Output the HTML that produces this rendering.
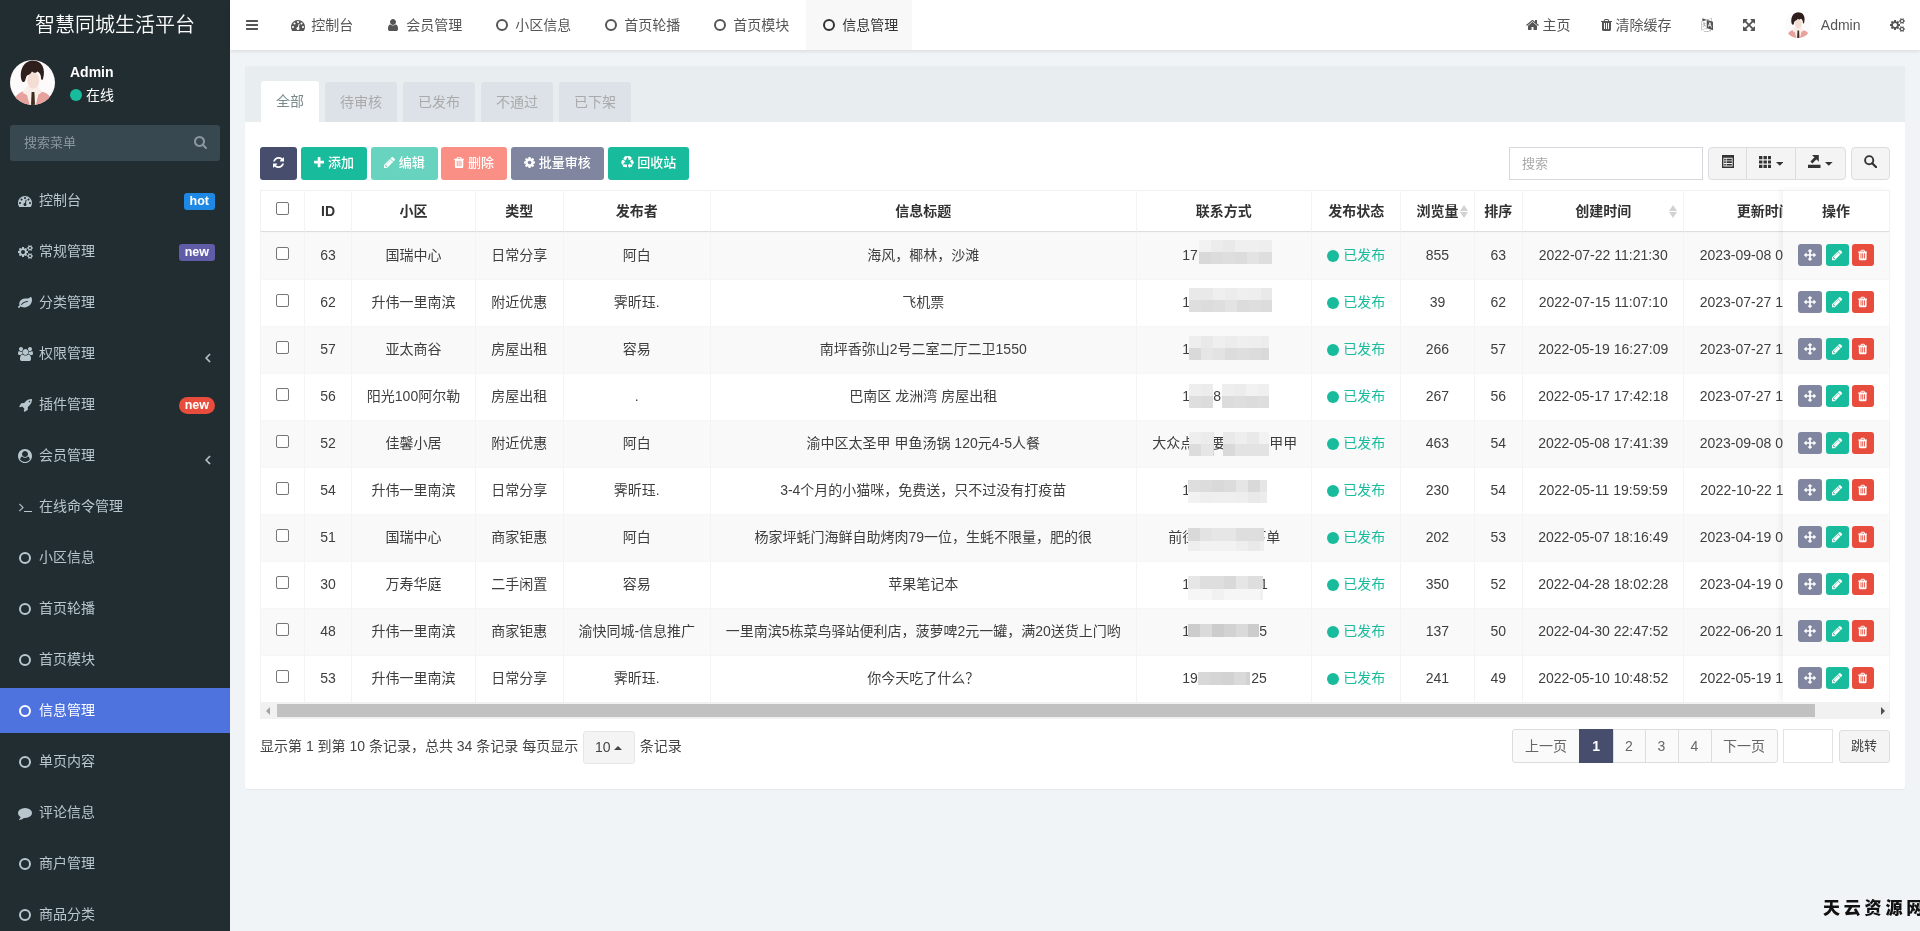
<!DOCTYPE html><html lang="zh-CN"><head><meta charset="utf-8"><title>智慧同城生活平台</title><style>
*{box-sizing:border-box}
html,body{margin:0;padding:0}
body{will-change:transform;width:1920px;height:931px;overflow:hidden;background:#f1f4f6;font-family:"Liberation Sans","Noto Sans CJK SC",sans-serif;font-size:14px;color:#444;position:relative;line-height:1.42857}
svg.fa{display:inline-block;vertical-align:-2px}
#side{position:absolute;left:0;top:0;width:230px;height:931px;background:#222d32;overflow:hidden}
#logo{height:50px;line-height:51px;text-align:center;color:#fff;font-size:20px;font-weight:350;letter-spacing:0}
#user{position:absolute;left:10px;top:60px;height:45px}
#user .nm{position:absolute;left:60px;top:3px;color:#fff;font-weight:bold;font-size:14px;white-space:nowrap}
#user .st{position:absolute;left:60px;top:26px;color:#fff;font-size:14px;white-space:nowrap}
#user .dot{display:inline-block;width:12px;height:12px;border-radius:50%;background:#18bc9c;margin-right:4px;vertical-align:-.5px}
#sform{position:absolute;left:10px;top:125px;width:210px;height:36px;background:#374850;border-radius:3px;color:#8b979e;font-size:13px;line-height:36px;padding-left:14px}
#sform svg{position:absolute;right:13px;top:10px}
ul.menu{position:absolute;left:0;top:174.5px;margin:0;padding:0;list-style:none;width:230px}
ul.menu li{height:45px;margin:3px 0 6px 0;line-height:45px;color:#b8c7ce;font-size:14px;position:relative;padding-left:39px;white-space:nowrap}
ul.menu li .ic{position:absolute;left:16px;top:1px;width:18px;text-align:center}
ul.menu li.act{background:#4e73df;color:#fff}
.co{display:inline-block;width:12px;height:12px;border:2px solid currentColor;border-radius:50%;vertical-align:-1px}
.lab{position:absolute;right:15px;top:15.5px;height:17px;line-height:16px;font-size:12.5px;font-weight:bold;color:#fff;padding:0 6px;border-radius:3px}
.ang{position:absolute;right:19.5px;top:5px}
#top{position:absolute;left:230px;top:0;width:1690px;height:50px;background:#fff;box-shadow:0 1px 4px rgba(0,21,41,.12)}
#top .t{position:absolute;top:0;height:50px;line-height:50px;color:#555;font-size:14px;white-space:nowrap}
#top .fw{display:inline-block;width:18px;text-align:center}
#top .t.act{background:#f8f8f8;color:#333}
#panel{position:absolute;left:245px;top:65px;width:1660px;height:724px}
#pbg{position:absolute;left:0;top:1px;width:1660px;height:723px;background:#fff;border-radius:0 0 3px 3px;box-shadow:0 1px 1px rgba(0,0,0,.05)}
#phead{position:absolute;left:0;top:1px;width:1660px;height:55.5px;background:#e8edf0}
.tab{position:absolute;top:15.5px;height:40px;line-height:40px;text-align:center;font-size:14px;color:#aaa;background:#dce2e8;border-radius:3px 3px 0 0}
.tab.act{background:#fff;color:#7b8a8b;top:15px;height:40.5px}
.btn{position:absolute;top:82px;height:33px;line-height:32px;font-weight:500;color:#fff;font-size:13px;border-radius:3px;text-align:center;white-space:nowrap}

#tw{position:absolute;left:15px;top:125px;width:1630px;height:512px;overflow:hidden}
#tw table{border-collapse:separate;border-spacing:0;table-layout:fixed;width:1695px;border:0}
#tw th{height:42px;padding:1px 0 0 0;box-sizing:border-box;text-align:center;font-weight:bold;color:#333;border-left:1px solid #f4f4f4;border-bottom:1px solid #ddd;border-top:1px solid #f1f1f1;white-space:nowrap;overflow:hidden;position:relative;vertical-align:middle;font-size:14px}
#tw td{height:47px;box-sizing:border-box;padding:0;text-align:center;border-left:1px solid #f4f4f4;border-top:1px solid #f6f6f6;white-space:nowrap;overflow:hidden;position:relative;vertical-align:middle;color:#3e3e3e}
#tw tr.o td{background:#f9f9f9}
#tw td.c{text-align:left}
#tw td.c b{font-weight:normal;position:absolute;top:13px}
.mz{position:absolute;height:12px;display:block}
.ck{display:inline-block;width:13px;height:13px;border:1px solid #767676;border-radius:2px;background:#fff;vertical-align:middle;position:relative;top:-3px}
.pub{color:#18bc9c}
.pub i{display:inline-block;width:12px;height:12px;border-radius:50%;background:#18bc9c;margin-right:4px;vertical-align:-1.5px}
.srt{position:absolute;right:6px;top:14px;width:8px;height:14px}
.srt:before,.srt:after{content:"";position:absolute;left:0;border-left:4px solid transparent;border-right:4px solid transparent}
.srt:before{top:0;border-bottom:6.5px solid #d2d2d2}
.srt:after{top:7px;border-top:6.5px solid #d2d2d2}
#fx{position:absolute;left:1538px;top:125px;width:107px;height:512px;background:#fff;box-shadow:-3px 0 6px rgba(0,0,0,.05);overflow:hidden}
#fx .fh{height:42px;line-height:40.5px;text-align:center;font-weight:bold;color:#333;border-bottom:1px solid #ddd;border-top:1px solid #f1f1f1;border-right:1px solid #f1f1f1}
#fx .fr{height:47px;position:relative;border-right:1px solid #f4f4f4;border-top:1px solid #f6f6f6}
#fx .fr.o{background:#f9f9f9}
.ab{position:absolute;top:11px;height:22px;border-radius:3px;text-align:center;line-height:20px;color:#fff}
.ab svg{vertical-align:-2px}
#sb{position:absolute;left:15px;top:637px;width:1630px;height:17px;background:#f1f1f1}
#sb .th{position:absolute;left:17px;top:2px;width:1538px;height:13px;background:#c1c1c1}
#sb .al,#sb .ar{position:absolute;top:4.5px;border-top:4px solid transparent;border-bottom:4px solid transparent}
#sb .al{left:6px;border-right:4.5px solid #a3a3a3}
#sb .ar{right:5px;border-left:4.5px solid #505050}
#pinfo{position:absolute;left:15px;top:665px;height:33px;line-height:33px;color:#444;white-space:nowrap}
#pinfo .dd{display:inline-block;width:52px;position:relative;left:.5px;top:1px;height:33px;line-height:31px;border:1px solid #e6e6e6;background:#f4f4f4;border-radius:3px;text-align:center;margin:0 5.5px 0 4px;vertical-align:top;color:#444}
.pg{position:absolute;top:664px;height:34px;line-height:32px;text-align:center;border:1px solid #ddd;background:#fafafa;color:#666;white-space:nowrap}
#pinfo .cu{display:inline-block;border-left:4px solid transparent;border-right:4px solid transparent;border-bottom:4.5px solid #444;vertical-align:2px}
#srch{position:absolute;left:1264px;top:82px;width:194px;height:33px;border:1px solid #d4d7dc;background:#fff;color:#aaa;line-height:31px;padding-left:12px;font-size:13px}
.tb{position:absolute;top:82px;height:32.5px;border:1px solid #ddd;background:#f4f4f4;color:#444;text-align:center;line-height:31px;white-space:nowrap}
#wm{position:absolute;left:1823px;top:894.5px;font-size:17px;font-weight:900;color:#111;letter-spacing:3.8px;white-space:nowrap;font-family:"Noto Sans CJK SC","Liberation Sans",sans-serif}
</style></head><body>
<div id="side"><div id="logo">智慧同城生活平台</div>
<div id="user"><svg width="45" height="45" viewBox="0 0 45 45" style="display:block"><defs><clipPath id="c45"><circle cx="22.5" cy="22.5" r="22.5"/></clipPath></defs><g clip-path="url(#c45)"><rect width="45" height="45" fill="#fcfafa"/><path d="M3 46C3 37 9 31 18 30.5L21.5 46zM43 46C43 38 38 31.5 29 31.5L25.5 46z" fill="#e8a29e"/><path d="M13 33c1-5 5-8 9.500-8s8 3 9.500 7l-4 3-3 11h-5l-3-11z" fill="#f8efeb"/><ellipse cx="23.300" cy="20.500" rx="6" ry="8" fill="#f4ddd2"/><path d="M11.5 20C9 10 14 .5 23 .5c9 0 13 8.500 10 18.500-.5 1.500-2 1-2-1 0-3-1.500-5.500-3.500-6.500-1.500 2-4 1.500-5.500 0-1 2.500-3.500 3.500-5 4-1 1.500-1.500 4-2 5.500-1 2-3 1-3.500-1z" fill="#2f1f1c"/><path d="M21.600 32h2.800l.6 13h-4z" fill="#3d2c22"/></g></svg><div class="nm">Admin</div><div class="st"><span class="dot"></span>在线</div></div>
<div id="sform">搜索菜单<svg class="fa" width="13.00" height="14" viewBox="0 -1536 1664 1792" style=""><path fill="#8b979e" transform="scale(1,-1)" d="M1152 704q0 185 -131.5 316.5t-316.5 131.5t-316.5 -131.5t-131.5 -316.5t131.5 -316.5t316.5 -131.5t316.5 131.5t131.5 316.5zM1664 -128q0 -52 -38 -90t-90 -38q-54 0 -90 38l-343 342q-179 -124 -399 -124q-143 0 -273.5 55.5t-225 150t-150 225t-55.5 273.5 t55.5 273.5t150 225t225 150t273.5 55.5t273.5 -55.5t225 -150t150 -225t55.5 -273.5q0 -220 -124 -399l343 -343q37 -37 37 -90z"/></svg></div>
<ul class="menu">
<li><span class="ic"><svg class="fa" width="14.00" height="14" viewBox="0 -1536 1792 1792" style=""><path fill="currentColor" transform="scale(1,-1)" d="M384 384q0 53 -37.5 90.5t-90.5 37.5t-90.5 -37.5t-37.5 -90.5t37.5 -90.5t90.5 -37.5t90.5 37.5t37.5 90.5zM576 832q0 53 -37.5 90.5t-90.5 37.5t-90.5 -37.5t-37.5 -90.5t37.5 -90.5t90.5 -37.5t90.5 37.5t37.5 90.5zM1004 351l101 382q6 26 -7.5 48.5t-38.5 29.5 t-48 -6.5t-30 -39.5l-101 -382q-60 -5 -107 -43.5t-63 -98.5q-20 -77 20 -146t117 -89t146 20t89 117q16 60 -6 117t-72 91zM1664 384q0 53 -37.5 90.5t-90.5 37.5t-90.5 -37.5t-37.5 -90.5t37.5 -90.5t90.5 -37.5t90.5 37.5t37.5 90.5zM1024 1024q0 53 -37.5 90.5 t-90.5 37.5t-90.5 -37.5t-37.5 -90.5t37.5 -90.5t90.5 -37.5t90.5 37.5t37.5 90.5zM1472 832q0 53 -37.5 90.5t-90.5 37.5t-90.5 -37.5t-37.5 -90.5t37.5 -90.5t90.5 -37.5t90.5 37.5t37.5 90.5zM1792 384q0 -261 -141 -483q-19 -29 -54 -29h-1402q-35 0 -54 29 q-141 221 -141 483q0 182 71 348t191 286t286 191t348 71t348 -71t286 -191t191 -286t71 -348z"/></svg></span>控制台<span class="lab" style="background:#1e88e5;border-radius:3px">hot</span></li>
<li><span class="ic"><svg class="fa" width="15.00" height="14" viewBox="0 -1536 1920 1792" style=""><path fill="currentColor" transform="scale(1,-1)" d="M896 640q0 106 -75 181t-181 75t-181 -75t-75 -181t75 -181t181 -75t181 75t75 181zM1664 128q0 52 -38 90t-90 38t-90 -38t-38 -90q0 -53 37.5 -90.5t90.5 -37.5t90.5 37.5t37.5 90.5zM1664 1152q0 52 -38 90t-90 38t-90 -38t-38 -90q0 -53 37.5 -90.5t90.5 -37.5 t90.5 37.5t37.5 90.5zM1280 731v-185q0 -10 -7 -19.5t-16 -10.5l-155 -24q-11 -35 -32 -76q34 -48 90 -115q7 -11 7 -20q0 -12 -7 -19q-23 -30 -82.5 -89.5t-78.5 -59.5q-11 0 -21 7l-115 90q-37 -19 -77 -31q-11 -108 -23 -155q-7 -24 -30 -24h-186q-11 0 -20 7.5t-10 17.5 l-23 153q-34 10 -75 31l-118 -89q-7 -7 -20 -7q-11 0 -21 8q-144 133 -144 160q0 9 7 19q10 14 41 53t47 61q-23 44 -35 82l-152 24q-10 1 -17 9.5t-7 19.5v185q0 10 7 19.5t16 10.5l155 24q11 35 32 76q-34 48 -90 115q-7 11 -7 20q0 12 7 20q22 30 82 89t79 59q11 0 21 -7 l115 -90q34 18 77 32q11 108 23 154q7 24 30 24h186q11 0 20 -7.5t10 -17.5l23 -153q34 -10 75 -31l118 89q8 7 20 7q11 0 21 -8q144 -133 144 -160q0 -8 -7 -19q-12 -16 -42 -54t-45 -60q23 -48 34 -82l152 -23q10 -2 17 -10.5t7 -19.5zM1920 198v-140q0 -16 -149 -31 q-12 -27 -30 -52q51 -113 51 -138q0 -4 -4 -7q-122 -71 -124 -71q-8 0 -46 47t-52 68q-20 -2 -30 -2t-30 2q-14 -21 -52 -68t-46 -47q-2 0 -124 71q-4 3 -4 7q0 25 51 138q-18 25 -30 52q-149 15 -149 31v140q0 16 149 31q13 29 30 52q-51 113 -51 138q0 4 4 7q4 2 35 20 t59 34t30 16q8 0 46 -46.5t52 -67.5q20 2 30 2t30 -2q51 71 92 112l6 2q4 0 124 -70q4 -3 4 -7q0 -25 -51 -138q17 -23 30 -52q149 -15 149 -31zM1920 1222v-140q0 -16 -149 -31q-12 -27 -30 -52q51 -113 51 -138q0 -4 -4 -7q-122 -71 -124 -71q-8 0 -46 47t-52 68 q-20 -2 -30 -2t-30 2q-14 -21 -52 -68t-46 -47q-2 0 -124 71q-4 3 -4 7q0 25 51 138q-18 25 -30 52q-149 15 -149 31v140q0 16 149 31q13 29 30 52q-51 113 -51 138q0 4 4 7q4 2 35 20t59 34t30 16q8 0 46 -46.5t52 -67.5q20 2 30 2t30 -2q51 71 92 112l6 2q4 0 124 -70 q4 -3 4 -7q0 -25 -51 -138q17 -23 30 -52q149 -15 149 -31z"/></svg></span>常规管理<span class="lab" style="background:#605ca8;border-radius:3px">new</span></li>
<li><span class="ic"><svg class="fa" width="14.00" height="14" viewBox="0 -1536 1792 1792" style=""><path fill="currentColor" transform="scale(1,-1)" d="M1280 832q0 26 -19 45t-45 19q-172 0 -318 -49.5t-259.5 -134t-235.5 -219.5q-19 -21 -19 -45q0 -26 19 -45t45 -19q24 0 45 19q27 24 74 71t67 66q137 124 268.5 176t313.5 52q26 0 45 19t19 45zM1792 1030q0 -95 -20 -193q-46 -224 -184.5 -383t-357.5 -268 q-214 -108 -438 -108q-148 0 -286 47q-15 5 -88 42t-96 37q-16 0 -39.5 -32t-45 -70t-52.5 -70t-60 -32q-43 0 -63.5 17.5t-45.5 59.5q-2 4 -6 11t-5.5 10t-3 9.5t-1.5 13.5q0 35 31 73.5t68 65.5t68 56t31 48q0 4 -14 38t-16 44q-9 51 -9 104q0 115 43.5 220t119 184.5 t170.5 139t204 95.5q55 18 145 25.5t179.5 9t178.5 6t163.5 24t113.5 56.5l29.5 29.5t29.5 28t27 20t36.5 16t43.5 4.5q39 0 70.5 -46t47.5 -112t24 -124t8 -96z"/></svg></span>分类管理</li>
<li><span class="ic"><svg class="fa" width="15.00" height="14" viewBox="0 -1536 1920 1792" style=""><path fill="currentColor" transform="scale(1,-1)" d="M593 640q-162 -5 -265 -128h-134q-82 0 -138 40.5t-56 118.5q0 353 124 353q6 0 43.5 -21t97.5 -42.5t119 -21.5q67 0 133 23q-5 -37 -5 -66q0 -139 81 -256zM1664 3q0 -120 -73 -189.5t-194 -69.5h-874q-121 0 -194 69.5t-73 189.5q0 53 3.5 103.5t14 109t26.5 108.5 t43 97.5t62 81t85.5 53.5t111.5 20q10 0 43 -21.5t73 -48t107 -48t135 -21.5t135 21.5t107 48t73 48t43 21.5q61 0 111.5 -20t85.5 -53.5t62 -81t43 -97.5t26.5 -108.5t14 -109t3.5 -103.5zM640 1280q0 -106 -75 -181t-181 -75t-181 75t-75 181t75 181t181 75t181 -75 t75 -181zM1344 896q0 -159 -112.5 -271.5t-271.5 -112.5t-271.5 112.5t-112.5 271.5t112.5 271.5t271.5 112.5t271.5 -112.5t112.5 -271.5zM1920 671q0 -78 -56 -118.5t-138 -40.5h-134q-103 123 -265 128q81 117 81 256q0 29 -5 66q66 -23 133 -23q59 0 119 21.5t97.5 42.5 t43.5 21q124 0 124 -353zM1792 1280q0 -106 -75 -181t-181 -75t-181 75t-75 181t75 181t181 75t181 -75t75 -181z"/></svg></span>权限管理<span class="ang"><svg class="fa" width="5.36" height="15" viewBox="0 -1536 640 1792" style="stroke:currentColor;stroke-width:60"><path fill="currentColor" transform="scale(1,-1)" d="M627 992q0 -13 -10 -23l-393 -393l393 -393q10 -10 10 -23t-10 -23l-50 -50q-10 -10 -23 -10t-23 10l-466 466q-10 10 -10 23t10 23l466 466q10 10 23 10t23 -10l50 -50q10 -10 10 -23z"/></svg></span></li>
<li><span class="ic"><svg class="fa" width="13.00" height="14" viewBox="0 -1536 1664 1792" style=""><path fill="currentColor" transform="scale(1,-1)" d="M1440 1088q0 40 -28 68t-68 28t-68 -28t-28 -68t28 -68t68 -28t68 28t28 68zM1664 1376q0 -249 -75.5 -430.5t-253.5 -360.5q-81 -80 -195 -176l-20 -379q-2 -16 -16 -26l-384 -224q-7 -4 -16 -4q-12 0 -23 9l-64 64q-13 14 -8 32l85 276l-281 281l-276 -85q-3 -1 -9 -1 q-14 0 -23 9l-64 64q-17 19 -5 39l224 384q10 14 26 16l379 20q96 114 176 195q188 187 358 258t431 71q14 0 24 -9.5t10 -22.5z"/></svg></span>插件管理<span class="lab" style="background:#e74c3c;border-radius:9px">new</span></li>
<li><span class="ic"><svg class="fa" width="14.00" height="14" viewBox="0 -1536 1792 1792" style=""><path fill="currentColor" transform="scale(1,-1)" d="M1523 197q-22 155 -87.5 257.5t-184.5 118.5q-67 -74 -159.5 -115.5t-195.5 -41.5t-195.5 41.5t-159.5 115.5q-119 -16 -184.5 -118.5t-87.5 -257.5q106 -150 271 -237.5t356 -87.5t356 87.5t271 237.5zM1280 896q0 159 -112.5 271.5t-271.5 112.5t-271.5 -112.5 t-112.5 -271.5t112.5 -271.5t271.5 -112.5t271.5 112.5t112.5 271.5zM1792 640q0 -182 -71 -347.5t-190.5 -286t-285.5 -191.5t-349 -71q-182 0 -348 71t-286 191t-191 286t-71 348t71 348t191 286t286 191t348 71t348 -71t286 -191t191 -286t71 -348z"/></svg></span>会员管理<span class="ang"><svg class="fa" width="5.36" height="15" viewBox="0 -1536 640 1792" style="stroke:currentColor;stroke-width:60"><path fill="currentColor" transform="scale(1,-1)" d="M627 992q0 -13 -10 -23l-393 -393l393 -393q10 -10 10 -23t-10 -23l-50 -50q-10 -10 -23 -10t-23 10l-466 466q-10 10 -10 23t10 23l466 466q10 10 23 10t23 -10l50 -50q10 -10 10 -23z"/></svg></span></li>
<li><span class="ic"><svg class="fa" width="13.00" height="14" viewBox="0 -1536 1664 1792" style=""><path fill="currentColor" transform="scale(1,-1)" d="M585 553l-466 -466q-10 -10 -23 -10t-23 10l-50 50q-10 10 -10 23t10 23l393 393l-393 393q-10 10 -10 23t10 23l50 50q10 10 23 10t23 -10l466 -466q10 -10 10 -23t-10 -23zM1664 96v-64q0 -14 -9 -23t-23 -9h-960q-14 0 -23 9t-9 23v64q0 14 9 23t23 9h960q14 0 23 -9 t9 -23z"/></svg></span>在线命令管理</li>
<li><span class="ic"><span class="co"></span></span>小区信息</li>
<li><span class="ic"><span class="co"></span></span>首页轮播</li>
<li><span class="ic"><span class="co"></span></span>首页模块</li>
<li class="act"><span class="ic"><span class="co"></span></span>信息管理</li>
<li><span class="ic"><span class="co"></span></span>单页内容</li>
<li><span class="ic"><svg class="fa" width="14.00" height="14" viewBox="0 -1536 1792 1792" style=""><path fill="currentColor" transform="scale(1,-1)" d="M1792 640q0 -174 -120 -321.5t-326 -233t-450 -85.5q-70 0 -145 8q-198 -175 -460 -242q-49 -14 -114 -22q-17 -2 -30.5 9t-17.5 29v1q-3 4 -0.5 12t2 10t4.5 9.5l6 9t7 8.5t8 9q7 8 31 34.5t34.5 38t31 39.5t32.5 51t27 59t26 76q-157 89 -247.5 220t-90.5 281 q0 130 71 248.5t191 204.5t286 136.5t348 50.5q244 0 450 -85.5t326 -233t120 -321.5z"/></svg></span>评论信息</li>
<li><span class="ic"><span class="co"></span></span>商户管理</li>
<li><span class="ic"><span class="co"></span></span>商品分类</li>
</ul></div>
<div id="top">
<div class="t" style="left:16px"><svg class="fa" width="12.00" height="14" viewBox="0 -1536 1536 1792" style=""><path fill="#555" transform="scale(1,-1)" d="M1536 192v-128q0 -26 -19 -45t-45 -19h-1408q-26 0 -45 19t-19 45v128q0 26 19 45t45 19h1408q26 0 45 -19t19 -45zM1536 704v-128q0 -26 -19 -45t-45 -19h-1408q-26 0 -45 19t-19 45v128q0 26 19 45t45 19h1408q26 0 45 -19t19 -45zM1536 1216v-128q0 -26 -19 -45 t-45 -19h-1408q-26 0 -45 19t-19 45v128q0 26 19 45t45 19h1408q26 0 45 -19t19 -45z"/></svg></div>
<div class="t" style="left:45.4px;padding:0 14px"><span class="fw"><svg class="fa" width="14.00" height="14" viewBox="0 -1536 1792 1792" style=""><path fill="currentColor" transform="scale(1,-1)" d="M384 384q0 53 -37.5 90.5t-90.5 37.5t-90.5 -37.5t-37.5 -90.5t37.5 -90.5t90.5 -37.5t90.5 37.5t37.5 90.5zM576 832q0 53 -37.5 90.5t-90.5 37.5t-90.5 -37.5t-37.5 -90.5t37.5 -90.5t90.5 -37.5t90.5 37.5t37.5 90.5zM1004 351l101 382q6 26 -7.5 48.5t-38.5 29.5 t-48 -6.5t-30 -39.5l-101 -382q-60 -5 -107 -43.5t-63 -98.5q-20 -77 20 -146t117 -89t146 20t89 117q16 60 -6 117t-72 91zM1664 384q0 53 -37.5 90.5t-90.5 37.5t-90.5 -37.5t-37.5 -90.5t37.5 -90.5t90.5 -37.5t90.5 37.5t37.5 90.5zM1024 1024q0 53 -37.5 90.5 t-90.5 37.5t-90.5 -37.5t-37.5 -90.5t37.5 -90.5t90.5 -37.5t90.5 37.5t37.5 90.5zM1472 832q0 53 -37.5 90.5t-90.5 37.5t-90.5 -37.5t-37.5 -90.5t37.5 -90.5t90.5 -37.5t90.5 37.5t37.5 90.5zM1792 384q0 -261 -141 -483q-19 -29 -54 -29h-1402q-35 0 -54 29 q-141 221 -141 483q0 182 71 348t191 286t286 191t348 71t348 -71t286 -191t191 -286t71 -348z"/></svg></span> 控制台</div>
<div class="t" style="left:140.4px;padding:0 14px"><span class="fw"><svg class="fa" width="10.00" height="14" viewBox="0 -1536 1280 1792" style=""><path fill="currentColor" transform="scale(1,-1)" d="M1280 137q0 -109 -62.5 -187t-150.5 -78h-854q-88 0 -150.5 78t-62.5 187q0 85 8.5 160.5t31.5 152t58.5 131t94 89t134.5 34.5q131 -128 313 -128t313 128q76 0 134.5 -34.5t94 -89t58.5 -131t31.5 -152t8.5 -160.5zM1024 1024q0 -159 -112.5 -271.5t-271.5 -112.5 t-271.5 112.5t-112.5 271.5t112.5 271.5t271.5 112.5t271.5 -112.5t112.5 -271.5z"/></svg></span> 会员管理</div>
<div class="t" style="left:249.4px;padding:0 14px"><span class="fw"><span class="co"></span></span> 小区信息</div>
<div class="t" style="left:358.4px;padding:0 14px"><span class="fw"><span class="co"></span></span> 首页轮播</div>
<div class="t" style="left:467.4px;padding:0 14px"><span class="fw"><span class="co"></span></span> 首页模块</div>
<div class="t act" style="left:576.3px;padding:0 14px"><span class="fw"><span class="co"></span></span> 信息管理</div>
<div class="t" style="left:1295.7px"><svg class="fa" width="13.00" height="14" viewBox="0 -1536 1664 1792" style=""><path fill="currentColor" transform="scale(1,-1)" d="M1408 544v-480q0 -26 -19 -45t-45 -19h-384v384h-256v-384h-384q-26 0 -45 19t-19 45v480q0 1 0.5 3t0.5 3l575 474l575 -474q1 -2 1 -6zM1631 613l-62 -74q-8 -9 -21 -11h-3q-13 0 -21 7l-692 577l-692 -577q-12 -8 -24 -7q-13 2 -21 11l-62 74q-8 10 -7 23.5t11 21.5 l719 599q32 26 76 26t76 -26l244 -204v195q0 14 9 23t23 9h192q14 0 23 -9t9 -23v-408l219 -182q10 -8 11 -21.5t-7 -23.5z"/></svg> 主页</div>
<div class="t" style="left:1370.7px"><svg class="fa" width="11.00" height="14" viewBox="0 -1536 1408 1792" style=""><path fill="currentColor" transform="scale(1,-1)" d="M512 160v704q0 14 -9 23t-23 9h-64q-14 0 -23 -9t-9 -23v-704q0 -14 9 -23t23 -9h64q14 0 23 9t9 23zM768 160v704q0 14 -9 23t-23 9h-64q-14 0 -23 -9t-9 -23v-704q0 -14 9 -23t23 -9h64q14 0 23 9t9 23zM1024 160v704q0 14 -9 23t-23 9h-64q-14 0 -23 -9t-9 -23v-704 q0 -14 9 -23t23 -9h64q14 0 23 9t9 23zM480 1152h448l-48 117q-7 9 -17 11h-317q-10 -2 -17 -11zM1408 1120v-64q0 -14 -9 -23t-23 -9h-96v-948q0 -83 -47 -143.5t-113 -60.5h-832q-66 0 -113 58.5t-47 141.5v952h-96q-14 0 -23 9t-9 23v64q0 14 9 23t23 9h309l70 167 q15 37 54 63t79 26h320q40 0 79 -26t54 -63l70 -167h309q14 0 23 -9t9 -23z"/></svg> 清除缓存</div>
<div class="t" style="left:1471px"><svg class="fa" width="12.00" height="14" viewBox="0 -1536 1536 1792" style=""><path fill="currentColor" transform="scale(1,-1)" d="M654 458q-1 -3 -12.5 0.5t-31.5 11.5l-20 9q-44 20 -87 49q-7 5 -41 31.5t-38 28.5q-67 -103 -134 -181q-81 -95 -105 -110q-4 -2 -19.5 -4t-18.5 0q6 4 82 92q21 24 85.5 115t78.5 118q17 30 51 98.5t36 77.5q-8 1 -110 -33q-8 -2 -27.5 -7.5t-34.5 -9.5t-17 -5 q-2 -2 -2 -10.5t-1 -9.5q-5 -10 -31 -15q-23 -7 -47 0q-18 4 -28 21q-4 6 -5 23q6 2 24.5 5t29.5 6q58 16 105 32q100 35 102 35q10 2 43 19.5t44 21.5q9 3 21.5 8t14.5 5.5t6 -0.5q2 -12 -1 -33q0 -2 -12.5 -27t-26.5 -53.5t-17 -33.5q-25 -50 -77 -131l64 -28 q12 -6 74.5 -32t67.5 -28q4 -1 10.5 -25.5t4.5 -30.5zM449 944q3 -15 -4 -28q-12 -23 -50 -38q-30 -12 -60 -12q-26 3 -49 26q-14 15 -18 41l1 3q3 -3 19.5 -5t26.5 0t58 16q36 12 55 14q17 0 21 -17zM1147 815l63 -227l-139 42zM39 15l694 232v1032l-694 -233v-1031z M1280 332l102 -31l-181 657l-100 31l-216 -536l102 -31l45 110l211 -65zM777 1294l573 -184v380zM1088 -29l158 -13l-54 -160l-40 66q-130 -83 -276 -108q-58 -12 -91 -12h-84q-79 0 -199.5 39t-183.5 85q-8 7 -8 16q0 8 5 13.5t13 5.5q4 0 18 -7.5t30.5 -16.5t20.5 -11 q73 -37 159.5 -61.5t157.5 -24.5q95 0 167 14.5t157 50.5q15 7 30.5 15.5t34 19t28.5 16.5zM1536 1050v-1079l-774 246q-14 -6 -375 -127.5t-368 -121.5q-13 0 -18 13q0 1 -1 3v1078q3 9 4 10q5 6 20 11q107 36 149 50v384l558 -198q2 0 160.5 55t316 108.5t161.5 53.5 q20 0 20 -21v-418z"/></svg></div>
<div class="t" style="left:1513.3px"><svg class="fa" width="12.00" height="14" viewBox="0 -1536 1536 1792" style=""><path fill="currentColor" transform="scale(1,-1)" d="M1283 995l-355 -355l355 -355l144 144q29 31 70 14q39 -17 39 -59v-448q0 -26 -19 -45t-45 -19h-448q-42 0 -59 40q-17 39 14 69l144 144l-355 355l-355 -355l144 -144q31 -30 14 -69q-17 -40 -59 -40h-448q-26 0 -45 19t-19 45v448q0 42 40 59q39 17 69 -14l144 -144 l355 355l-355 355l-144 -144q-19 -19 -45 -19q-12 0 -24 5q-40 17 -40 59v448q0 26 19 45t45 19h448q42 0 59 -40q17 -39 -14 -69l-144 -144l355 -355l355 355l-144 144q-31 30 -14 69q17 40 59 40h448q26 0 45 -19t19 -45v-448q0 -42 -39 -59q-13 -5 -25 -5q-26 0 -45 19z "/></svg></div>
<div class="t" style="left:1555px;top:12px;height:26px"><svg width="26" height="26" viewBox="0 0 45 45" style="display:block"><defs><clipPath id="c26"><circle cx="22.5" cy="22.5" r="22.5"/></clipPath></defs><g clip-path="url(#c26)"><rect width="45" height="45" fill="#fcfafa"/><path d="M3 46C3 37 9 31 18 30.5L21.5 46zM43 46C43 38 38 31.5 29 31.5L25.5 46z" fill="#e8a29e"/><path d="M13 33c1-5 5-8 9.500-8s8 3 9.500 7l-4 3-3 11h-5l-3-11z" fill="#f8efeb"/><ellipse cx="23.300" cy="20.500" rx="6" ry="8" fill="#f4ddd2"/><path d="M11.5 20C9 10 14 .5 23 .5c9 0 13 8.500 10 18.500-.5 1.500-2 1-2-1 0-3-1.500-5.500-3.500-6.500-1.500 2-4 1.500-5.500 0-1 2.500-3.500 3.500-5 4-1 1.500-1.500 4-2 5.500-1 2-3 1-3.500-1z" fill="#2f1f1c"/><path d="M21.600 32h2.800l.6 13h-4z" fill="#3d2c22"/></g></svg></div>
<div class="t" style="left:1590.8px">Admin</div>
<div class="t" style="left:1660px"><svg class="fa" width="15.00" height="14" viewBox="0 -1536 1920 1792" style=""><path fill="currentColor" transform="scale(1,-1)" d="M896 640q0 106 -75 181t-181 75t-181 -75t-75 -181t75 -181t181 -75t181 75t75 181zM1664 128q0 52 -38 90t-90 38t-90 -38t-38 -90q0 -53 37.5 -90.5t90.5 -37.5t90.5 37.5t37.5 90.5zM1664 1152q0 52 -38 90t-90 38t-90 -38t-38 -90q0 -53 37.5 -90.5t90.5 -37.5 t90.5 37.5t37.5 90.5zM1280 731v-185q0 -10 -7 -19.5t-16 -10.5l-155 -24q-11 -35 -32 -76q34 -48 90 -115q7 -11 7 -20q0 -12 -7 -19q-23 -30 -82.5 -89.5t-78.5 -59.5q-11 0 -21 7l-115 90q-37 -19 -77 -31q-11 -108 -23 -155q-7 -24 -30 -24h-186q-11 0 -20 7.5t-10 17.5 l-23 153q-34 10 -75 31l-118 -89q-7 -7 -20 -7q-11 0 -21 8q-144 133 -144 160q0 9 7 19q10 14 41 53t47 61q-23 44 -35 82l-152 24q-10 1 -17 9.5t-7 19.5v185q0 10 7 19.5t16 10.5l155 24q11 35 32 76q-34 48 -90 115q-7 11 -7 20q0 12 7 20q22 30 82 89t79 59q11 0 21 -7 l115 -90q34 18 77 32q11 108 23 154q7 24 30 24h186q11 0 20 -7.5t10 -17.5l23 -153q34 -10 75 -31l118 89q8 7 20 7q11 0 21 -8q144 -133 144 -160q0 -8 -7 -19q-12 -16 -42 -54t-45 -60q23 -48 34 -82l152 -23q10 -2 17 -10.5t7 -19.5zM1920 198v-140q0 -16 -149 -31 q-12 -27 -30 -52q51 -113 51 -138q0 -4 -4 -7q-122 -71 -124 -71q-8 0 -46 47t-52 68q-20 -2 -30 -2t-30 2q-14 -21 -52 -68t-46 -47q-2 0 -124 71q-4 3 -4 7q0 25 51 138q-18 25 -30 52q-149 15 -149 31v140q0 16 149 31q13 29 30 52q-51 113 -51 138q0 4 4 7q4 2 35 20 t59 34t30 16q8 0 46 -46.5t52 -67.5q20 2 30 2t30 -2q51 71 92 112l6 2q4 0 124 -70q4 -3 4 -7q0 -25 -51 -138q17 -23 30 -52q149 -15 149 -31zM1920 1222v-140q0 -16 -149 -31q-12 -27 -30 -52q51 -113 51 -138q0 -4 -4 -7q-122 -71 -124 -71q-8 0 -46 47t-52 68 q-20 -2 -30 -2t-30 2q-14 -21 -52 -68t-46 -47q-2 0 -124 71q-4 3 -4 7q0 25 51 138q-18 25 -30 52q-149 15 -149 31v140q0 16 149 31q13 29 30 52q-51 113 -51 138q0 4 4 7q4 2 35 20t59 34t30 16q8 0 46 -46.5t52 -67.5q20 2 30 2t30 -2q51 71 92 112l6 2q4 0 124 -70 q4 -3 4 -7q0 -25 -51 -138q17 -23 30 -52q149 -15 149 -31z"/></svg></div>
</div>
<div id="panel"><div id="pbg"></div><div id="phead">
<div class="tab act" style="left:16px;width:58px">全部</div>
<div class="tab" style="left:80px;width:72px">待审核</div>
<div class="tab" style="left:158px;width:72px">已发布</div>
<div class="tab" style="left:236px;width:72px">不通过</div>
<div class="tab" style="left:314px;width:72px">已下架</div>
</div>
<div class="btn" style="left:15px;width:37px;background:#474e6d;opacity:1"><svg class="fa" width="11.14" height="13" viewBox="0 -1536 1536 1792" style=""><path fill="currentColor" transform="scale(1,-1)" d="M1511 480q0 -5 -1 -7q-64 -268 -268 -434.5t-478 -166.5q-146 0 -282.5 55t-243.5 157l-129 -129q-19 -19 -45 -19t-45 19t-19 45v448q0 26 19 45t45 19h448q26 0 45 -19t19 -45t-19 -45l-137 -137q71 -66 161 -102t187 -36q134 0 250 65t186 179q11 17 53 117 q8 23 30 23h192q13 0 22.5 -9.5t9.5 -22.5zM1536 1280v-448q0 -26 -19 -45t-45 -19h-448q-26 0 -45 19t-19 45t19 45l138 138q-148 137 -349 137q-134 0 -250 -65t-186 -179q-11 -17 -53 -117q-8 -23 -30 -23h-199q-13 0 -22.5 9.5t-9.5 22.5v7q65 268 270 434.5t480 166.5 q146 0 284 -55.5t245 -156.5l130 129q19 19 45 19t45 -19t19 -45z"/></svg></div>
<div class="btn" style="left:56px;width:66px;background:#18bc9c;opacity:1"><svg class="fa" width="10.21" height="13" viewBox="0 -1536 1408 1792" style=""><path fill="currentColor" transform="scale(1,-1)" d="M1408 800v-192q0 -40 -28 -68t-68 -28h-416v-416q0 -40 -28 -68t-68 -28h-192q-40 0 -68 28t-28 68v416h-416q-40 0 -68 28t-28 68v192q0 40 28 68t68 28h416v416q0 40 28 68t68 28h192q40 0 68 -28t28 -68v-416h416q40 0 68 -28t28 -68z"/></svg> 添加</div>
<div class="btn" style="left:126px;width:67px;background:#18bc9c;opacity:0.65"><svg class="fa" width="11.14" height="13" viewBox="0 -1536 1536 1792" style=""><path fill="currentColor" transform="scale(1,-1)" d="M363 0l91 91l-235 235l-91 -91v-107h128v-128h107zM886 928q0 22 -22 22q-10 0 -17 -7l-542 -542q-7 -7 -7 -17q0 -22 22 -22q10 0 17 7l542 542q7 7 7 17zM832 1120l416 -416l-832 -832h-416v416zM1515 1024q0 -53 -37 -90l-166 -166l-416 416l166 165q36 38 90 38 q53 0 91 -38l235 -234q37 -39 37 -91z"/></svg> 编辑</div>
<div class="btn" style="left:196px;width:66px;background:#f75444;opacity:0.65"><svg class="fa" width="10.21" height="13" viewBox="0 -1536 1408 1792" style=""><path fill="currentColor" transform="scale(1,-1)" d="M512 160v704q0 14 -9 23t-23 9h-64q-14 0 -23 -9t-9 -23v-704q0 -14 9 -23t23 -9h64q14 0 23 9t9 23zM768 160v704q0 14 -9 23t-23 9h-64q-14 0 -23 -9t-9 -23v-704q0 -14 9 -23t23 -9h64q14 0 23 9t9 23zM1024 160v704q0 14 -9 23t-23 9h-64q-14 0 -23 -9t-9 -23v-704 q0 -14 9 -23t23 -9h64q14 0 23 9t9 23zM480 1152h448l-48 117q-7 9 -17 11h-317q-10 -2 -17 -11zM1408 1120v-64q0 -14 -9 -23t-23 -9h-96v-948q0 -83 -47 -143.5t-113 -60.5h-832q-66 0 -113 58.5t-47 141.5v952h-96q-14 0 -23 9t-9 23v64q0 14 9 23t23 9h309l70 167 q15 37 54 63t79 26h320q40 0 79 -26t54 -63l70 -167h309q14 0 23 -9t9 -23z"/></svg> 删除</div>
<div class="btn" style="left:266px;width:93px;background:#8085a0;opacity:1"><svg class="fa" width="11.14" height="13" viewBox="0 -1536 1536 1792" style=""><path fill="currentColor" transform="scale(1,-1)" d="M1024 640q0 106 -75 181t-181 75t-181 -75t-75 -181t75 -181t181 -75t181 75t75 181zM1536 749v-222q0 -12 -8 -23t-20 -13l-185 -28q-19 -54 -39 -91q35 -50 107 -138q10 -12 10 -25t-9 -23q-27 -37 -99 -108t-94 -71q-12 0 -26 9l-138 108q-44 -23 -91 -38 q-16 -136 -29 -186q-7 -28 -36 -28h-222q-14 0 -24.5 8.5t-11.5 21.5l-28 184q-49 16 -90 37l-141 -107q-10 -9 -25 -9q-14 0 -25 11q-126 114 -165 168q-7 10 -7 23q0 12 8 23q15 21 51 66.5t54 70.5q-27 50 -41 99l-183 27q-13 2 -21 12.5t-8 23.5v222q0 12 8 23t19 13 l186 28q14 46 39 92q-40 57 -107 138q-10 12 -10 24q0 10 9 23q26 36 98.5 107.5t94.5 71.5q13 0 26 -10l138 -107q44 23 91 38q16 136 29 186q7 28 36 28h222q14 0 24.5 -8.5t11.5 -21.5l28 -184q49 -16 90 -37l142 107q9 9 24 9q13 0 25 -10q129 -119 165 -170q7 -8 7 -22 q0 -12 -8 -23q-15 -21 -51 -66.5t-54 -70.5q26 -50 41 -98l183 -28q13 -2 21 -12.5t8 -23.5z"/></svg> 批量审核</div>
<div class="btn" style="left:363px;width:81px;background:#18bc9c;opacity:1"><svg class="fa" width="13.00" height="13" viewBox="0 -1536 1792 1792" style=""><path fill="currentColor" transform="scale(1,-1)" d="M836 367l-15 -368l-2 -22l-420 29q-36 3 -67 31.5t-47 65.5q-11 27 -14.5 55t4 65t12 55t21.5 64t19 53q78 -12 509 -28zM449 953l180 -379l-147 92q-63 -72 -111.5 -144.5t-72.5 -125t-39.5 -94.5t-18.5 -63l-4 -21l-190 357q-17 26 -18 56t6 47l8 18q35 63 114 188 l-140 86zM1680 436l-188 -359q-12 -29 -36.5 -46.5t-43.5 -20.5l-18 -4q-71 -7 -219 -12l8 -164l-230 367l211 362l7 -173q170 -16 283 -5t170 33zM895 1360q-47 -63 -265 -435l-317 187l-19 12l225 356q20 31 60 45t80 10q24 -2 48.5 -12t42 -21t41.5 -33t36 -34.5 t36 -39.5t32 -35zM1550 1053l212 -363q18 -37 12.5 -76t-27.5 -74q-13 -20 -33 -37t-38 -28t-48.5 -22t-47 -16t-51.5 -14t-46 -12q-34 72 -265 436l313 195zM1407 1279l142 83l-220 -373l-419 20l151 86q-34 89 -75 166t-75.5 123.5t-64.5 80t-47 46.5l-17 13l405 -1 q31 3 58 -10.5t39 -28.5l11 -15q39 -61 112 -190z"/></svg> 回收站</div>
<div id="srch">搜索</div>
<div class="tb" style="left:1463px;width:38.5px;border-radius:4px 0 0 4px"><svg width="12" height="13" viewBox="0 0 12 13" style="position:absolute;left:12.900000000000091px;top:7.099999999999994px"><path fill="#333" d="M0 0h12v13H0zM1.4 2.8v8.8h9.2V2.8z" fill-rule="evenodd"/><path fill="#333" d="M2.2 3.7h1.6v1.7H2.2zM4.6 3.7h5.2v1.7H4.6zM2.2 6.3h1.6V8H2.2zM4.6 6.3h5.2V8H4.6zM2.2 8.9h1.6v1.7H2.2zM4.6 8.9h5.2v1.7H4.6z"/></svg></div>
<div class="tb" style="left:1500.5px;width:50px"><svg width="12.4" height="12" viewBox="0 0 12.4 12" style="position:absolute;left:12.400000000000091px;top:8px"><path fill="#333" d="M0 0h3.4v3.2H0zM4.5 0h3.4v3.2H4.5zM9 0h3.4v3.2H9zM0 4.4h3.4v3.2H0zM4.5 4.4h3.4v3.2H4.5zM9 4.4h3.4v3.2H9zM0 8.8h3.4V12H0zM4.5 8.8h3.4V12H4.5zM9 8.8h3.4V12H9z"/></svg><svg width="7.6" height="3.8" viewBox="0 0 8 4" style="position:absolute;left:29.0px;top:13.800000000000011px"><path fill="#333" d="M0 0h8L4 4z"/></svg></div>
<div class="tb" style="left:1549.5px;width:51px;border-radius:0 4px 4px 0"><svg width="12.5" height="13" viewBox="0 0 12.5 13" style="position:absolute;left:12.799999999999955px;top:7.099999999999994px"><path fill="#333" d="M0 9.8h12.5V13H0zM4 0h6.8v6.8zM7 1.8l2 2-4.6 4.8-2-2z"/></svg><svg width="7.6" height="3.8" viewBox="0 0 8 4" style="position:absolute;left:29.90000000000009px;top:13.800000000000011px"><path fill="#333" d="M0 0h8L4 4z"/></svg></div>
<div class="tb" style="left:1606px;width:38.5px;border-radius:4px"><svg width="13" height="13" viewBox="0 0 13 13" style="position:absolute;left:12px;top:7.199999999999989px"><circle cx="5.2" cy="5.2" r="4.1" fill="none" stroke="#333" stroke-width="1.9"/><path d="M8.2 8.2l4 4" stroke="#333" stroke-width="2.2" stroke-linecap="round"/></svg></div>
<div id="tw"><table><colgroup><col style="width:44px"><col style="width:47px"><col style="width:124px"><col style="width:87.5px"><col style="width:147.5px"><col style="width:425.5px"><col style="width:175.5px"><col style="width:89.4px"><col style="width:73.2px"><col style="width:48.4px"><col style="width:161.5px"><col style="width:161.5px"><col style="width:110px"></colgroup><thead><tr>
<th style="border-left:1px solid #f1f1f1"><span class="ck"></span></th>
<th>ID</th>
<th>小区</th>
<th>类型</th>
<th>发布者</th>
<th>信息标题</th>
<th>联系方式</th>
<th>发布状态</th>
<th>浏览量<span class="srt"></span></th>
<th>排序</th>
<th>创建时间<span class="srt"></span></th>
<th>更新时间<span class="srt"></span></th>
<th>操作</th>
</tr></thead><tbody>
<tr class="o"><td><span class="ck"></span></td><td>63</td><td>国瑞中心</td><td>日常分享</td><td>阿白</td><td>海风，椰林，沙滩</td><td class="c"><b style="left:45.8px">17</b><i class="mz" style="left:62.0px;top:7px;height:12px;width:73.0px;background:linear-gradient(90deg,#f2f2f2 0.0px,#f2f2f2 12.0px,#ececec 12.0px,#ececec 24.0px,#e9e9e9 24.0px,#e9e9e9 36.0px,#efefef 36.0px,#efefef 48.0px,#efefef 48.0px,#efefef 60.0px,#eeeeee 60.0px,#eeeeee 72.0px,#efefef 72.0px,#efefef 73.0px)"></i><i class="mz" style="left:62.0px;top:19px;height:12px;width:73.0px;background:linear-gradient(90deg,#d9d9d9 0.0px,#d9d9d9 12.0px,#dcdcdc 12.0px,#dcdcdc 24.0px,#dedede 24.0px,#dedede 36.0px,#dcdcdc 36.0px,#dcdcdc 48.0px,#e3e3e3 48.0px,#e3e3e3 60.0px,#dedede 60.0px,#dedede 72.0px,#dedede 72.0px,#dedede 73.0px)"></i></td><td><span class="pub"><i></i>已发布</span></td><td>855</td><td>63</td><td>2022-07-22 11:21:30</td><td>2023-09-08 09:12:45</td><td></td></tr>
<tr><td><span class="ck"></span></td><td>62</td><td>升伟一里南滨</td><td>附近优惠</td><td>霁昕珏.</td><td>飞机票</td><td class="c"><b style="left:45.8px">1</b><i class="mz" style="left:52.5px;top:8px;height:12px;width:82.5px;background:linear-gradient(90deg,#e9e9e9 0.0px,#e9e9e9 12.0px,#e9e9e9 12.0px,#e9e9e9 24.0px,#efefef 24.0px,#efefef 36.0px,#ececec 36.0px,#ececec 48.0px,#efefef 48.0px,#efefef 60.0px,#eeeeee 60.0px,#eeeeee 72.0px,#e9e9e9 72.0px,#e9e9e9 82.5px)"></i><i class="mz" style="left:52.5px;top:20px;height:12px;width:82.5px;background:linear-gradient(90deg,#dedede 0.0px,#dedede 12.0px,#dcdcdc 12.0px,#dcdcdc 24.0px,#dedede 24.0px,#dedede 36.0px,#e3e3e3 36.0px,#e3e3e3 48.0px,#dcdcdc 48.0px,#dcdcdc 60.0px,#dedede 60.0px,#dedede 72.0px,#dcdcdc 72.0px,#dcdcdc 82.5px)"></i></td><td><span class="pub"><i></i>已发布</span></td><td>39</td><td>62</td><td>2022-07-15 11:07:10</td><td>2023-07-27 15:08:21</td><td></td></tr>
<tr class="o"><td><span class="ck"></span></td><td>57</td><td>亚太商谷</td><td>房屋出租</td><td>容易</td><td>南坪香弥山2号二室二厅二卫1550</td><td class="c"><b style="left:45.8px">1</b><i class="mz" style="left:52.5px;top:9px;height:12px;width:79.5px;background:linear-gradient(90deg,#eeeeee 0.0px,#eeeeee 12.0px,#e9e9e9 12.0px,#e9e9e9 24.0px,#efefef 24.0px,#efefef 36.0px,#ececec 36.0px,#ececec 48.0px,#efefef 48.0px,#efefef 60.0px,#eeeeee 60.0px,#eeeeee 72.0px,#ececec 72.0px,#ececec 79.5px)"></i><i class="mz" style="left:52.5px;top:21px;height:12px;width:79.5px;background:linear-gradient(90deg,#d9d9d9 0.0px,#d9d9d9 12.0px,#e6e6e6 12.0px,#e6e6e6 24.0px,#e3e3e3 24.0px,#e3e3e3 36.0px,#dcdcdc 36.0px,#dcdcdc 48.0px,#dedede 48.0px,#dedede 60.0px,#dcdcdc 60.0px,#dcdcdc 72.0px,#d9d9d9 72.0px,#d9d9d9 79.5px)"></i></td><td><span class="pub"><i></i>已发布</span></td><td>266</td><td>57</td><td>2022-05-19 16:27:09</td><td>2023-07-27 15:08:33</td><td></td></tr>
<tr><td><span class="ck"></span></td><td>56</td><td>阳光100阿尔勒</td><td>房屋出租</td><td>.</td><td>巴南区 龙洲湾 房屋出租</td><td class="c"><b style="left:45.8px">1</b><b style="left:76.8px">8</b><i class="mz" style="left:52.5px;top:10px;height:12px;width:23.5px;background:linear-gradient(90deg,#eeeeee 0.0px,#eeeeee 12.0px,#ececec 12.0px,#ececec 23.5px)"></i><i class="mz" style="left:52.5px;top:22px;height:12px;width:23.5px;background:linear-gradient(90deg,#dedede 0.0px,#dedede 12.0px,#dcdcdc 12.0px,#dcdcdc 23.5px)"></i><i class="mz" style="left:85.0px;top:10px;height:12px;width:47.0px;background:linear-gradient(90deg,#eeeeee 0.0px,#eeeeee 12.0px,#ececec 12.0px,#ececec 24.0px,#f2f2f2 24.0px,#f2f2f2 36.0px,#efefef 36.0px,#efefef 47.0px)"></i><i class="mz" style="left:85.0px;top:22px;height:12px;width:47.0px;background:linear-gradient(90deg,#dcdcdc 0.0px,#dcdcdc 12.0px,#dedede 12.0px,#dedede 24.0px,#dcdcdc 24.0px,#dcdcdc 36.0px,#dedede 36.0px,#dedede 47.0px)"></i></td><td><span class="pub"><i></i>已发布</span></td><td>267</td><td>56</td><td>2022-05-17 17:42:18</td><td>2023-07-27 15:08:40</td><td></td></tr>
<tr class="o"><td><span class="ck"></span></td><td>52</td><td>佳馨小居</td><td>附近优惠</td><td>阿白</td><td>渝中区太圣甲 甲鱼汤锅 120元4-5人餐</td><td class="c"><b style="left:15.8px">大众点</b><b style="left:75.8px">要</b><b style="left:132.8px">甲甲</b><i class="mz" style="left:52.5px;top:11px;height:12px;width:25.0px;background:linear-gradient(90deg,#eeeeee 0.0px,#eeeeee 12.0px,#ececec 12.0px,#ececec 24.0px,#e9e9e9 24.0px,#e9e9e9 25.0px)"></i><i class="mz" style="left:52.5px;top:23px;height:12px;width:25.0px;background:linear-gradient(90deg,#dcdcdc 0.0px,#dcdcdc 12.0px,#e6e6e6 12.0px,#e6e6e6 24.0px,#d9d9d9 24.0px,#d9d9d9 25.0px)"></i><i class="mz" style="left:86.5px;top:11px;height:12px;width:45.5px;background:linear-gradient(90deg,#e9e9e9 0.0px,#e9e9e9 12.0px,#eeeeee 12.0px,#eeeeee 24.0px,#e9e9e9 24.0px,#e9e9e9 36.0px,#f2f2f2 36.0px,#f2f2f2 45.5px)"></i><i class="mz" style="left:86.5px;top:23px;height:12px;width:45.5px;background:linear-gradient(90deg,#d9d9d9 0.0px,#d9d9d9 12.0px,#e3e3e3 12.0px,#e3e3e3 24.0px,#e3e3e3 24.0px,#e3e3e3 36.0px,#e3e3e3 36.0px,#e3e3e3 45.5px)"></i></td><td><span class="pub"><i></i>已发布</span></td><td>463</td><td>54</td><td>2022-05-08 17:41:39</td><td>2023-09-08 09:13:02</td><td></td></tr>
<tr><td><span class="ck"></span></td><td>54</td><td>升伟一里南滨</td><td>日常分享</td><td>霁昕珏.</td><td>3-4个月的小猫咪，免费送，只不过没有打疫苗</td><td class="c"><b style="left:45.8px">1</b><i class="mz" style="left:51.5px;top:12px;height:12px;width:79.0px;background:linear-gradient(90deg,#dedede 0.0px,#dedede 12.0px,#dcdcdc 12.0px,#dcdcdc 24.0px,#d9d9d9 24.0px,#d9d9d9 36.0px,#dcdcdc 36.0px,#dcdcdc 48.0px,#e6e6e6 48.0px,#e6e6e6 60.0px,#d9d9d9 60.0px,#d9d9d9 72.0px,#e6e6e6 72.0px,#e6e6e6 79.0px)"></i><i class="mz" style="left:51.5px;top:24px;height:11px;width:79.0px;background:linear-gradient(90deg,#f2f2f2 0.0px,#f2f2f2 12.0px,#eeeeee 12.0px,#eeeeee 24.0px,#efefef 24.0px,#efefef 36.0px,#efefef 36.0px,#efefef 48.0px,#eeeeee 48.0px,#eeeeee 60.0px,#e9e9e9 60.0px,#e9e9e9 72.0px,#ececec 72.0px,#ececec 79.0px)"></i></td><td><span class="pub"><i></i>已发布</span></td><td>230</td><td>54</td><td>2022-05-11 19:59:59</td><td>2022-10-22 16:40:11</td><td></td></tr>
<tr class="o"><td><span class="ck"></span></td><td>51</td><td>国瑞中心</td><td>商家钜惠</td><td>阿白</td><td>杨家坪蚝门海鲜自助烤肉79一位，生蚝不限量，肥的很</td><td class="c"><b style="left:31.8px">前往</b><b style="left:115.8px">下单</b><i class="mz" style="left:51.5px;top:13px;height:13px;width:75.5px;background:linear-gradient(90deg,#d9d9d9 0.0px,#d9d9d9 12.0px,#e3e3e3 12.0px,#e3e3e3 24.0px,#e6e6e6 24.0px,#e6e6e6 36.0px,#e6e6e6 36.0px,#e6e6e6 48.0px,#dedede 48.0px,#dedede 60.0px,#dedede 60.0px,#dedede 72.0px,#dcdcdc 72.0px,#dcdcdc 75.5px)"></i><i class="mz" style="left:51.5px;top:26px;height:10px;width:75.5px;background:linear-gradient(90deg,#eeeeee 0.0px,#eeeeee 12.0px,#f2f2f2 12.0px,#f2f2f2 24.0px,#f2f2f2 24.0px,#f2f2f2 36.0px,#f2f2f2 36.0px,#f2f2f2 48.0px,#eeeeee 48.0px,#eeeeee 60.0px,#e9e9e9 60.0px,#e9e9e9 72.0px,#eeeeee 72.0px,#eeeeee 75.5px)"></i></td><td><span class="pub"><i></i>已发布</span></td><td>202</td><td>53</td><td>2022-05-07 18:16:49</td><td>2023-04-19 09:30:18</td><td></td></tr>
<tr><td><span class="ck"></span></td><td>30</td><td>万寿华庭</td><td>二手闲置</td><td>容易</td><td>苹果笔记本</td><td class="c"><b style="left:45.8px">1</b><b style="left:123.6px">1</b><i class="mz" style="left:51.5px;top:14px;height:12.5px;width:74.5px;background:linear-gradient(90deg,#e6e6e6 0.0px,#e6e6e6 12.0px,#dedede 12.0px,#dedede 24.0px,#dedede 24.0px,#dedede 36.0px,#d9d9d9 36.0px,#d9d9d9 48.0px,#e6e6e6 48.0px,#e6e6e6 60.0px,#dedede 60.0px,#dedede 72.0px,#dedede 72.0px,#dedede 74.5px)"></i><i class="mz" style="left:51.5px;top:26.5px;height:11.5px;width:74.5px;background:linear-gradient(90deg,#f6f6f6 0.0px,#f6f6f6 12.0px,#f6f6f6 12.0px,#f6f6f6 24.0px,#f1f1f1 24.0px,#f1f1f1 36.0px,#f6f6f6 36.0px,#f6f6f6 48.0px,#f6f6f6 48.0px,#f6f6f6 60.0px,#f6f6f6 60.0px,#f6f6f6 72.0px,#f1f1f1 72.0px,#f1f1f1 74.5px)"></i></td><td><span class="pub"><i></i>已发布</span></td><td>350</td><td>52</td><td>2022-04-28 18:02:28</td><td>2023-04-19 09:30:25</td><td></td></tr>
<tr class="o"><td><span class="ck"></span></td><td>48</td><td>升伟一里南滨</td><td>商家钜惠</td><td>渝快同城-信息推广</td><td>一里南滨5栋菜鸟驿站便利店，菠萝啤2元一罐，满20送货上门哟</td><td class="c"><b style="left:45.8px">1</b><b style="left:122.8px">5</b><i class="mz" style="left:51.5px;top:15px;height:13px;width:70.5px;background:linear-gradient(90deg,#cccccc 0.0px,#cccccc 12.0px,#dadada 12.0px,#dadada 24.0px,#cccccc 24.0px,#cccccc 36.0px,#d2d2d2 36.0px,#d2d2d2 48.0px,#dadada 48.0px,#dadada 60.0px,#cccccc 60.0px,#cccccc 70.5px)"></i></td><td><span class="pub"><i></i>已发布</span></td><td>137</td><td>50</td><td>2022-04-30 22:47:52</td><td>2022-06-20 14:22:07</td><td></td></tr>
<tr><td><span class="ck"></span></td><td>53</td><td>升伟一里南滨</td><td>日常分享</td><td>霁昕珏.</td><td>你今天吃了什么？</td><td class="c"><b style="left:45.8px">19</b><b style="left:114.8px">25</b><i class="mz" style="left:61.5px;top:16px;height:12.5px;width:51.5px;background:linear-gradient(90deg,#d8d8d8 0.0px,#d8d8d8 12.0px,#d5d5d5 12.0px,#d5d5d5 24.0px,#d2d2d2 24.0px,#d2d2d2 36.0px,#dadada 36.0px,#dadada 48.0px,#d2d2d2 48.0px,#d2d2d2 51.5px)"></i></td><td><span class="pub"><i></i>已发布</span></td><td>241</td><td>49</td><td>2022-05-10 10:48:52</td><td>2022-05-19 16:30:00</td><td></td></tr>
</tbody></table></div>
<div id="fx"><div class="fh">操作</div>
<div class="fr o"><span class="ab" style="left:15px;width:24px;background:#8085a0"><svg class="fa" width="12.00" height="12" viewBox="0 -1536 1792 1792" style=""><path fill="currentColor" transform="scale(1,-1)" d="M1792 640q0 -26 -19 -45l-256 -256q-19 -19 -45 -19t-45 19t-19 45v128h-384v-384h128q26 0 45 -19t19 -45t-19 -45l-256 -256q-19 -19 -45 -19t-45 19l-256 256q-19 19 -19 45t19 45t45 19h128v384h-384v-128q0 -26 -19 -45t-45 -19t-45 19l-256 256q-19 19 -19 45 t19 45l256 256q19 19 45 19t45 -19t19 -45v-128h384v384h-128q-26 0 -45 19t-19 45t19 45l256 256q19 19 45 19t45 -19l256 -256q19 -19 19 -45t-19 -45t-45 -19h-128v-384h384v128q0 26 19 45t45 19t45 -19l256 -256q19 -19 19 -45z"/></svg></span><span class="ab" style="left:43px;width:23px;background:#18bc9c"><svg class="fa" width="10.29" height="12" viewBox="0 -1536 1536 1792" style=""><path fill="currentColor" transform="scale(1,-1)" d="M363 0l91 91l-235 235l-91 -91v-107h128v-128h107zM886 928q0 22 -22 22q-10 0 -17 -7l-542 -542q-7 -7 -7 -17q0 -22 22 -22q10 0 17 7l542 542q7 7 7 17zM832 1120l416 -416l-832 -832h-416v416zM1515 1024q0 -53 -37 -90l-166 -166l-416 416l166 165q36 38 90 38 q53 0 91 -38l235 -234q37 -39 37 -91z"/></svg></span><span class="ab" style="left:68.5px;width:22px;background:#e74c3c"><svg class="fa" width="9.43" height="12" viewBox="0 -1536 1408 1792" style=""><path fill="currentColor" transform="scale(1,-1)" d="M512 160v704q0 14 -9 23t-23 9h-64q-14 0 -23 -9t-9 -23v-704q0 -14 9 -23t23 -9h64q14 0 23 9t9 23zM768 160v704q0 14 -9 23t-23 9h-64q-14 0 -23 -9t-9 -23v-704q0 -14 9 -23t23 -9h64q14 0 23 9t9 23zM1024 160v704q0 14 -9 23t-23 9h-64q-14 0 -23 -9t-9 -23v-704 q0 -14 9 -23t23 -9h64q14 0 23 9t9 23zM480 1152h448l-48 117q-7 9 -17 11h-317q-10 -2 -17 -11zM1408 1120v-64q0 -14 -9 -23t-23 -9h-96v-948q0 -83 -47 -143.5t-113 -60.5h-832q-66 0 -113 58.5t-47 141.5v952h-96q-14 0 -23 9t-9 23v64q0 14 9 23t23 9h309l70 167 q15 37 54 63t79 26h320q40 0 79 -26t54 -63l70 -167h309q14 0 23 -9t9 -23z"/></svg></span></div>
<div class="fr"><span class="ab" style="left:15px;width:24px;background:#8085a0"><svg class="fa" width="12.00" height="12" viewBox="0 -1536 1792 1792" style=""><path fill="currentColor" transform="scale(1,-1)" d="M1792 640q0 -26 -19 -45l-256 -256q-19 -19 -45 -19t-45 19t-19 45v128h-384v-384h128q26 0 45 -19t19 -45t-19 -45l-256 -256q-19 -19 -45 -19t-45 19l-256 256q-19 19 -19 45t19 45t45 19h128v384h-384v-128q0 -26 -19 -45t-45 -19t-45 19l-256 256q-19 19 -19 45 t19 45l256 256q19 19 45 19t45 -19t19 -45v-128h384v384h-128q-26 0 -45 19t-19 45t19 45l256 256q19 19 45 19t45 -19l256 -256q19 -19 19 -45t-19 -45t-45 -19h-128v-384h384v128q0 26 19 45t45 19t45 -19l256 -256q19 -19 19 -45z"/></svg></span><span class="ab" style="left:43px;width:23px;background:#18bc9c"><svg class="fa" width="10.29" height="12" viewBox="0 -1536 1536 1792" style=""><path fill="currentColor" transform="scale(1,-1)" d="M363 0l91 91l-235 235l-91 -91v-107h128v-128h107zM886 928q0 22 -22 22q-10 0 -17 -7l-542 -542q-7 -7 -7 -17q0 -22 22 -22q10 0 17 7l542 542q7 7 7 17zM832 1120l416 -416l-832 -832h-416v416zM1515 1024q0 -53 -37 -90l-166 -166l-416 416l166 165q36 38 90 38 q53 0 91 -38l235 -234q37 -39 37 -91z"/></svg></span><span class="ab" style="left:68.5px;width:22px;background:#e74c3c"><svg class="fa" width="9.43" height="12" viewBox="0 -1536 1408 1792" style=""><path fill="currentColor" transform="scale(1,-1)" d="M512 160v704q0 14 -9 23t-23 9h-64q-14 0 -23 -9t-9 -23v-704q0 -14 9 -23t23 -9h64q14 0 23 9t9 23zM768 160v704q0 14 -9 23t-23 9h-64q-14 0 -23 -9t-9 -23v-704q0 -14 9 -23t23 -9h64q14 0 23 9t9 23zM1024 160v704q0 14 -9 23t-23 9h-64q-14 0 -23 -9t-9 -23v-704 q0 -14 9 -23t23 -9h64q14 0 23 9t9 23zM480 1152h448l-48 117q-7 9 -17 11h-317q-10 -2 -17 -11zM1408 1120v-64q0 -14 -9 -23t-23 -9h-96v-948q0 -83 -47 -143.5t-113 -60.5h-832q-66 0 -113 58.5t-47 141.5v952h-96q-14 0 -23 9t-9 23v64q0 14 9 23t23 9h309l70 167 q15 37 54 63t79 26h320q40 0 79 -26t54 -63l70 -167h309q14 0 23 -9t9 -23z"/></svg></span></div>
<div class="fr o"><span class="ab" style="left:15px;width:24px;background:#8085a0"><svg class="fa" width="12.00" height="12" viewBox="0 -1536 1792 1792" style=""><path fill="currentColor" transform="scale(1,-1)" d="M1792 640q0 -26 -19 -45l-256 -256q-19 -19 -45 -19t-45 19t-19 45v128h-384v-384h128q26 0 45 -19t19 -45t-19 -45l-256 -256q-19 -19 -45 -19t-45 19l-256 256q-19 19 -19 45t19 45t45 19h128v384h-384v-128q0 -26 -19 -45t-45 -19t-45 19l-256 256q-19 19 -19 45 t19 45l256 256q19 19 45 19t45 -19t19 -45v-128h384v384h-128q-26 0 -45 19t-19 45t19 45l256 256q19 19 45 19t45 -19l256 -256q19 -19 19 -45t-19 -45t-45 -19h-128v-384h384v128q0 26 19 45t45 19t45 -19l256 -256q19 -19 19 -45z"/></svg></span><span class="ab" style="left:43px;width:23px;background:#18bc9c"><svg class="fa" width="10.29" height="12" viewBox="0 -1536 1536 1792" style=""><path fill="currentColor" transform="scale(1,-1)" d="M363 0l91 91l-235 235l-91 -91v-107h128v-128h107zM886 928q0 22 -22 22q-10 0 -17 -7l-542 -542q-7 -7 -7 -17q0 -22 22 -22q10 0 17 7l542 542q7 7 7 17zM832 1120l416 -416l-832 -832h-416v416zM1515 1024q0 -53 -37 -90l-166 -166l-416 416l166 165q36 38 90 38 q53 0 91 -38l235 -234q37 -39 37 -91z"/></svg></span><span class="ab" style="left:68.5px;width:22px;background:#e74c3c"><svg class="fa" width="9.43" height="12" viewBox="0 -1536 1408 1792" style=""><path fill="currentColor" transform="scale(1,-1)" d="M512 160v704q0 14 -9 23t-23 9h-64q-14 0 -23 -9t-9 -23v-704q0 -14 9 -23t23 -9h64q14 0 23 9t9 23zM768 160v704q0 14 -9 23t-23 9h-64q-14 0 -23 -9t-9 -23v-704q0 -14 9 -23t23 -9h64q14 0 23 9t9 23zM1024 160v704q0 14 -9 23t-23 9h-64q-14 0 -23 -9t-9 -23v-704 q0 -14 9 -23t23 -9h64q14 0 23 9t9 23zM480 1152h448l-48 117q-7 9 -17 11h-317q-10 -2 -17 -11zM1408 1120v-64q0 -14 -9 -23t-23 -9h-96v-948q0 -83 -47 -143.5t-113 -60.5h-832q-66 0 -113 58.5t-47 141.5v952h-96q-14 0 -23 9t-9 23v64q0 14 9 23t23 9h309l70 167 q15 37 54 63t79 26h320q40 0 79 -26t54 -63l70 -167h309q14 0 23 -9t9 -23z"/></svg></span></div>
<div class="fr"><span class="ab" style="left:15px;width:24px;background:#8085a0"><svg class="fa" width="12.00" height="12" viewBox="0 -1536 1792 1792" style=""><path fill="currentColor" transform="scale(1,-1)" d="M1792 640q0 -26 -19 -45l-256 -256q-19 -19 -45 -19t-45 19t-19 45v128h-384v-384h128q26 0 45 -19t19 -45t-19 -45l-256 -256q-19 -19 -45 -19t-45 19l-256 256q-19 19 -19 45t19 45t45 19h128v384h-384v-128q0 -26 -19 -45t-45 -19t-45 19l-256 256q-19 19 -19 45 t19 45l256 256q19 19 45 19t45 -19t19 -45v-128h384v384h-128q-26 0 -45 19t-19 45t19 45l256 256q19 19 45 19t45 -19l256 -256q19 -19 19 -45t-19 -45t-45 -19h-128v-384h384v128q0 26 19 45t45 19t45 -19l256 -256q19 -19 19 -45z"/></svg></span><span class="ab" style="left:43px;width:23px;background:#18bc9c"><svg class="fa" width="10.29" height="12" viewBox="0 -1536 1536 1792" style=""><path fill="currentColor" transform="scale(1,-1)" d="M363 0l91 91l-235 235l-91 -91v-107h128v-128h107zM886 928q0 22 -22 22q-10 0 -17 -7l-542 -542q-7 -7 -7 -17q0 -22 22 -22q10 0 17 7l542 542q7 7 7 17zM832 1120l416 -416l-832 -832h-416v416zM1515 1024q0 -53 -37 -90l-166 -166l-416 416l166 165q36 38 90 38 q53 0 91 -38l235 -234q37 -39 37 -91z"/></svg></span><span class="ab" style="left:68.5px;width:22px;background:#e74c3c"><svg class="fa" width="9.43" height="12" viewBox="0 -1536 1408 1792" style=""><path fill="currentColor" transform="scale(1,-1)" d="M512 160v704q0 14 -9 23t-23 9h-64q-14 0 -23 -9t-9 -23v-704q0 -14 9 -23t23 -9h64q14 0 23 9t9 23zM768 160v704q0 14 -9 23t-23 9h-64q-14 0 -23 -9t-9 -23v-704q0 -14 9 -23t23 -9h64q14 0 23 9t9 23zM1024 160v704q0 14 -9 23t-23 9h-64q-14 0 -23 -9t-9 -23v-704 q0 -14 9 -23t23 -9h64q14 0 23 9t9 23zM480 1152h448l-48 117q-7 9 -17 11h-317q-10 -2 -17 -11zM1408 1120v-64q0 -14 -9 -23t-23 -9h-96v-948q0 -83 -47 -143.5t-113 -60.5h-832q-66 0 -113 58.5t-47 141.5v952h-96q-14 0 -23 9t-9 23v64q0 14 9 23t23 9h309l70 167 q15 37 54 63t79 26h320q40 0 79 -26t54 -63l70 -167h309q14 0 23 -9t9 -23z"/></svg></span></div>
<div class="fr o"><span class="ab" style="left:15px;width:24px;background:#8085a0"><svg class="fa" width="12.00" height="12" viewBox="0 -1536 1792 1792" style=""><path fill="currentColor" transform="scale(1,-1)" d="M1792 640q0 -26 -19 -45l-256 -256q-19 -19 -45 -19t-45 19t-19 45v128h-384v-384h128q26 0 45 -19t19 -45t-19 -45l-256 -256q-19 -19 -45 -19t-45 19l-256 256q-19 19 -19 45t19 45t45 19h128v384h-384v-128q0 -26 -19 -45t-45 -19t-45 19l-256 256q-19 19 -19 45 t19 45l256 256q19 19 45 19t45 -19t19 -45v-128h384v384h-128q-26 0 -45 19t-19 45t19 45l256 256q19 19 45 19t45 -19l256 -256q19 -19 19 -45t-19 -45t-45 -19h-128v-384h384v128q0 26 19 45t45 19t45 -19l256 -256q19 -19 19 -45z"/></svg></span><span class="ab" style="left:43px;width:23px;background:#18bc9c"><svg class="fa" width="10.29" height="12" viewBox="0 -1536 1536 1792" style=""><path fill="currentColor" transform="scale(1,-1)" d="M363 0l91 91l-235 235l-91 -91v-107h128v-128h107zM886 928q0 22 -22 22q-10 0 -17 -7l-542 -542q-7 -7 -7 -17q0 -22 22 -22q10 0 17 7l542 542q7 7 7 17zM832 1120l416 -416l-832 -832h-416v416zM1515 1024q0 -53 -37 -90l-166 -166l-416 416l166 165q36 38 90 38 q53 0 91 -38l235 -234q37 -39 37 -91z"/></svg></span><span class="ab" style="left:68.5px;width:22px;background:#e74c3c"><svg class="fa" width="9.43" height="12" viewBox="0 -1536 1408 1792" style=""><path fill="currentColor" transform="scale(1,-1)" d="M512 160v704q0 14 -9 23t-23 9h-64q-14 0 -23 -9t-9 -23v-704q0 -14 9 -23t23 -9h64q14 0 23 9t9 23zM768 160v704q0 14 -9 23t-23 9h-64q-14 0 -23 -9t-9 -23v-704q0 -14 9 -23t23 -9h64q14 0 23 9t9 23zM1024 160v704q0 14 -9 23t-23 9h-64q-14 0 -23 -9t-9 -23v-704 q0 -14 9 -23t23 -9h64q14 0 23 9t9 23zM480 1152h448l-48 117q-7 9 -17 11h-317q-10 -2 -17 -11zM1408 1120v-64q0 -14 -9 -23t-23 -9h-96v-948q0 -83 -47 -143.5t-113 -60.5h-832q-66 0 -113 58.5t-47 141.5v952h-96q-14 0 -23 9t-9 23v64q0 14 9 23t23 9h309l70 167 q15 37 54 63t79 26h320q40 0 79 -26t54 -63l70 -167h309q14 0 23 -9t9 -23z"/></svg></span></div>
<div class="fr"><span class="ab" style="left:15px;width:24px;background:#8085a0"><svg class="fa" width="12.00" height="12" viewBox="0 -1536 1792 1792" style=""><path fill="currentColor" transform="scale(1,-1)" d="M1792 640q0 -26 -19 -45l-256 -256q-19 -19 -45 -19t-45 19t-19 45v128h-384v-384h128q26 0 45 -19t19 -45t-19 -45l-256 -256q-19 -19 -45 -19t-45 19l-256 256q-19 19 -19 45t19 45t45 19h128v384h-384v-128q0 -26 -19 -45t-45 -19t-45 19l-256 256q-19 19 -19 45 t19 45l256 256q19 19 45 19t45 -19t19 -45v-128h384v384h-128q-26 0 -45 19t-19 45t19 45l256 256q19 19 45 19t45 -19l256 -256q19 -19 19 -45t-19 -45t-45 -19h-128v-384h384v128q0 26 19 45t45 19t45 -19l256 -256q19 -19 19 -45z"/></svg></span><span class="ab" style="left:43px;width:23px;background:#18bc9c"><svg class="fa" width="10.29" height="12" viewBox="0 -1536 1536 1792" style=""><path fill="currentColor" transform="scale(1,-1)" d="M363 0l91 91l-235 235l-91 -91v-107h128v-128h107zM886 928q0 22 -22 22q-10 0 -17 -7l-542 -542q-7 -7 -7 -17q0 -22 22 -22q10 0 17 7l542 542q7 7 7 17zM832 1120l416 -416l-832 -832h-416v416zM1515 1024q0 -53 -37 -90l-166 -166l-416 416l166 165q36 38 90 38 q53 0 91 -38l235 -234q37 -39 37 -91z"/></svg></span><span class="ab" style="left:68.5px;width:22px;background:#e74c3c"><svg class="fa" width="9.43" height="12" viewBox="0 -1536 1408 1792" style=""><path fill="currentColor" transform="scale(1,-1)" d="M512 160v704q0 14 -9 23t-23 9h-64q-14 0 -23 -9t-9 -23v-704q0 -14 9 -23t23 -9h64q14 0 23 9t9 23zM768 160v704q0 14 -9 23t-23 9h-64q-14 0 -23 -9t-9 -23v-704q0 -14 9 -23t23 -9h64q14 0 23 9t9 23zM1024 160v704q0 14 -9 23t-23 9h-64q-14 0 -23 -9t-9 -23v-704 q0 -14 9 -23t23 -9h64q14 0 23 9t9 23zM480 1152h448l-48 117q-7 9 -17 11h-317q-10 -2 -17 -11zM1408 1120v-64q0 -14 -9 -23t-23 -9h-96v-948q0 -83 -47 -143.5t-113 -60.5h-832q-66 0 -113 58.5t-47 141.5v952h-96q-14 0 -23 9t-9 23v64q0 14 9 23t23 9h309l70 167 q15 37 54 63t79 26h320q40 0 79 -26t54 -63l70 -167h309q14 0 23 -9t9 -23z"/></svg></span></div>
<div class="fr o"><span class="ab" style="left:15px;width:24px;background:#8085a0"><svg class="fa" width="12.00" height="12" viewBox="0 -1536 1792 1792" style=""><path fill="currentColor" transform="scale(1,-1)" d="M1792 640q0 -26 -19 -45l-256 -256q-19 -19 -45 -19t-45 19t-19 45v128h-384v-384h128q26 0 45 -19t19 -45t-19 -45l-256 -256q-19 -19 -45 -19t-45 19l-256 256q-19 19 -19 45t19 45t45 19h128v384h-384v-128q0 -26 -19 -45t-45 -19t-45 19l-256 256q-19 19 -19 45 t19 45l256 256q19 19 45 19t45 -19t19 -45v-128h384v384h-128q-26 0 -45 19t-19 45t19 45l256 256q19 19 45 19t45 -19l256 -256q19 -19 19 -45t-19 -45t-45 -19h-128v-384h384v128q0 26 19 45t45 19t45 -19l256 -256q19 -19 19 -45z"/></svg></span><span class="ab" style="left:43px;width:23px;background:#18bc9c"><svg class="fa" width="10.29" height="12" viewBox="0 -1536 1536 1792" style=""><path fill="currentColor" transform="scale(1,-1)" d="M363 0l91 91l-235 235l-91 -91v-107h128v-128h107zM886 928q0 22 -22 22q-10 0 -17 -7l-542 -542q-7 -7 -7 -17q0 -22 22 -22q10 0 17 7l542 542q7 7 7 17zM832 1120l416 -416l-832 -832h-416v416zM1515 1024q0 -53 -37 -90l-166 -166l-416 416l166 165q36 38 90 38 q53 0 91 -38l235 -234q37 -39 37 -91z"/></svg></span><span class="ab" style="left:68.5px;width:22px;background:#e74c3c"><svg class="fa" width="9.43" height="12" viewBox="0 -1536 1408 1792" style=""><path fill="currentColor" transform="scale(1,-1)" d="M512 160v704q0 14 -9 23t-23 9h-64q-14 0 -23 -9t-9 -23v-704q0 -14 9 -23t23 -9h64q14 0 23 9t9 23zM768 160v704q0 14 -9 23t-23 9h-64q-14 0 -23 -9t-9 -23v-704q0 -14 9 -23t23 -9h64q14 0 23 9t9 23zM1024 160v704q0 14 -9 23t-23 9h-64q-14 0 -23 -9t-9 -23v-704 q0 -14 9 -23t23 -9h64q14 0 23 9t9 23zM480 1152h448l-48 117q-7 9 -17 11h-317q-10 -2 -17 -11zM1408 1120v-64q0 -14 -9 -23t-23 -9h-96v-948q0 -83 -47 -143.5t-113 -60.5h-832q-66 0 -113 58.5t-47 141.5v952h-96q-14 0 -23 9t-9 23v64q0 14 9 23t23 9h309l70 167 q15 37 54 63t79 26h320q40 0 79 -26t54 -63l70 -167h309q14 0 23 -9t9 -23z"/></svg></span></div>
<div class="fr"><span class="ab" style="left:15px;width:24px;background:#8085a0"><svg class="fa" width="12.00" height="12" viewBox="0 -1536 1792 1792" style=""><path fill="currentColor" transform="scale(1,-1)" d="M1792 640q0 -26 -19 -45l-256 -256q-19 -19 -45 -19t-45 19t-19 45v128h-384v-384h128q26 0 45 -19t19 -45t-19 -45l-256 -256q-19 -19 -45 -19t-45 19l-256 256q-19 19 -19 45t19 45t45 19h128v384h-384v-128q0 -26 -19 -45t-45 -19t-45 19l-256 256q-19 19 -19 45 t19 45l256 256q19 19 45 19t45 -19t19 -45v-128h384v384h-128q-26 0 -45 19t-19 45t19 45l256 256q19 19 45 19t45 -19l256 -256q19 -19 19 -45t-19 -45t-45 -19h-128v-384h384v128q0 26 19 45t45 19t45 -19l256 -256q19 -19 19 -45z"/></svg></span><span class="ab" style="left:43px;width:23px;background:#18bc9c"><svg class="fa" width="10.29" height="12" viewBox="0 -1536 1536 1792" style=""><path fill="currentColor" transform="scale(1,-1)" d="M363 0l91 91l-235 235l-91 -91v-107h128v-128h107zM886 928q0 22 -22 22q-10 0 -17 -7l-542 -542q-7 -7 -7 -17q0 -22 22 -22q10 0 17 7l542 542q7 7 7 17zM832 1120l416 -416l-832 -832h-416v416zM1515 1024q0 -53 -37 -90l-166 -166l-416 416l166 165q36 38 90 38 q53 0 91 -38l235 -234q37 -39 37 -91z"/></svg></span><span class="ab" style="left:68.5px;width:22px;background:#e74c3c"><svg class="fa" width="9.43" height="12" viewBox="0 -1536 1408 1792" style=""><path fill="currentColor" transform="scale(1,-1)" d="M512 160v704q0 14 -9 23t-23 9h-64q-14 0 -23 -9t-9 -23v-704q0 -14 9 -23t23 -9h64q14 0 23 9t9 23zM768 160v704q0 14 -9 23t-23 9h-64q-14 0 -23 -9t-9 -23v-704q0 -14 9 -23t23 -9h64q14 0 23 9t9 23zM1024 160v704q0 14 -9 23t-23 9h-64q-14 0 -23 -9t-9 -23v-704 q0 -14 9 -23t23 -9h64q14 0 23 9t9 23zM480 1152h448l-48 117q-7 9 -17 11h-317q-10 -2 -17 -11zM1408 1120v-64q0 -14 -9 -23t-23 -9h-96v-948q0 -83 -47 -143.5t-113 -60.5h-832q-66 0 -113 58.5t-47 141.5v952h-96q-14 0 -23 9t-9 23v64q0 14 9 23t23 9h309l70 167 q15 37 54 63t79 26h320q40 0 79 -26t54 -63l70 -167h309q14 0 23 -9t9 -23z"/></svg></span></div>
<div class="fr o"><span class="ab" style="left:15px;width:24px;background:#8085a0"><svg class="fa" width="12.00" height="12" viewBox="0 -1536 1792 1792" style=""><path fill="currentColor" transform="scale(1,-1)" d="M1792 640q0 -26 -19 -45l-256 -256q-19 -19 -45 -19t-45 19t-19 45v128h-384v-384h128q26 0 45 -19t19 -45t-19 -45l-256 -256q-19 -19 -45 -19t-45 19l-256 256q-19 19 -19 45t19 45t45 19h128v384h-384v-128q0 -26 -19 -45t-45 -19t-45 19l-256 256q-19 19 -19 45 t19 45l256 256q19 19 45 19t45 -19t19 -45v-128h384v384h-128q-26 0 -45 19t-19 45t19 45l256 256q19 19 45 19t45 -19l256 -256q19 -19 19 -45t-19 -45t-45 -19h-128v-384h384v128q0 26 19 45t45 19t45 -19l256 -256q19 -19 19 -45z"/></svg></span><span class="ab" style="left:43px;width:23px;background:#18bc9c"><svg class="fa" width="10.29" height="12" viewBox="0 -1536 1536 1792" style=""><path fill="currentColor" transform="scale(1,-1)" d="M363 0l91 91l-235 235l-91 -91v-107h128v-128h107zM886 928q0 22 -22 22q-10 0 -17 -7l-542 -542q-7 -7 -7 -17q0 -22 22 -22q10 0 17 7l542 542q7 7 7 17zM832 1120l416 -416l-832 -832h-416v416zM1515 1024q0 -53 -37 -90l-166 -166l-416 416l166 165q36 38 90 38 q53 0 91 -38l235 -234q37 -39 37 -91z"/></svg></span><span class="ab" style="left:68.5px;width:22px;background:#e74c3c"><svg class="fa" width="9.43" height="12" viewBox="0 -1536 1408 1792" style=""><path fill="currentColor" transform="scale(1,-1)" d="M512 160v704q0 14 -9 23t-23 9h-64q-14 0 -23 -9t-9 -23v-704q0 -14 9 -23t23 -9h64q14 0 23 9t9 23zM768 160v704q0 14 -9 23t-23 9h-64q-14 0 -23 -9t-9 -23v-704q0 -14 9 -23t23 -9h64q14 0 23 9t9 23zM1024 160v704q0 14 -9 23t-23 9h-64q-14 0 -23 -9t-9 -23v-704 q0 -14 9 -23t23 -9h64q14 0 23 9t9 23zM480 1152h448l-48 117q-7 9 -17 11h-317q-10 -2 -17 -11zM1408 1120v-64q0 -14 -9 -23t-23 -9h-96v-948q0 -83 -47 -143.5t-113 -60.5h-832q-66 0 -113 58.5t-47 141.5v952h-96q-14 0 -23 9t-9 23v64q0 14 9 23t23 9h309l70 167 q15 37 54 63t79 26h320q40 0 79 -26t54 -63l70 -167h309q14 0 23 -9t9 -23z"/></svg></span></div>
<div class="fr"><span class="ab" style="left:15px;width:24px;background:#8085a0"><svg class="fa" width="12.00" height="12" viewBox="0 -1536 1792 1792" style=""><path fill="currentColor" transform="scale(1,-1)" d="M1792 640q0 -26 -19 -45l-256 -256q-19 -19 -45 -19t-45 19t-19 45v128h-384v-384h128q26 0 45 -19t19 -45t-19 -45l-256 -256q-19 -19 -45 -19t-45 19l-256 256q-19 19 -19 45t19 45t45 19h128v384h-384v-128q0 -26 -19 -45t-45 -19t-45 19l-256 256q-19 19 -19 45 t19 45l256 256q19 19 45 19t45 -19t19 -45v-128h384v384h-128q-26 0 -45 19t-19 45t19 45l256 256q19 19 45 19t45 -19l256 -256q19 -19 19 -45t-19 -45t-45 -19h-128v-384h384v128q0 26 19 45t45 19t45 -19l256 -256q19 -19 19 -45z"/></svg></span><span class="ab" style="left:43px;width:23px;background:#18bc9c"><svg class="fa" width="10.29" height="12" viewBox="0 -1536 1536 1792" style=""><path fill="currentColor" transform="scale(1,-1)" d="M363 0l91 91l-235 235l-91 -91v-107h128v-128h107zM886 928q0 22 -22 22q-10 0 -17 -7l-542 -542q-7 -7 -7 -17q0 -22 22 -22q10 0 17 7l542 542q7 7 7 17zM832 1120l416 -416l-832 -832h-416v416zM1515 1024q0 -53 -37 -90l-166 -166l-416 416l166 165q36 38 90 38 q53 0 91 -38l235 -234q37 -39 37 -91z"/></svg></span><span class="ab" style="left:68.5px;width:22px;background:#e74c3c"><svg class="fa" width="9.43" height="12" viewBox="0 -1536 1408 1792" style=""><path fill="currentColor" transform="scale(1,-1)" d="M512 160v704q0 14 -9 23t-23 9h-64q-14 0 -23 -9t-9 -23v-704q0 -14 9 -23t23 -9h64q14 0 23 9t9 23zM768 160v704q0 14 -9 23t-23 9h-64q-14 0 -23 -9t-9 -23v-704q0 -14 9 -23t23 -9h64q14 0 23 9t9 23zM1024 160v704q0 14 -9 23t-23 9h-64q-14 0 -23 -9t-9 -23v-704 q0 -14 9 -23t23 -9h64q14 0 23 9t9 23zM480 1152h448l-48 117q-7 9 -17 11h-317q-10 -2 -17 -11zM1408 1120v-64q0 -14 -9 -23t-23 -9h-96v-948q0 -83 -47 -143.5t-113 -60.5h-832q-66 0 -113 58.5t-47 141.5v952h-96q-14 0 -23 9t-9 23v64q0 14 9 23t23 9h309l70 167 q15 37 54 63t79 26h320q40 0 79 -26t54 -63l70 -167h309q14 0 23 -9t9 -23z"/></svg></span></div>
</div>
<div id="sb"><i class="al"></i><div class="th"></div><i class="ar"></i></div>
<div id="pinfo">显示第 1 到第 10 条记录，总共 34 条记录 每页显示<span class="dd">10 <i class="cu"></i></span>条记录</div>
<div class="pg" style="left:1267px;width:68px;border-radius:3px 0 0 3px;">上一页</div>
<div class="pg" style="left:1334px;width:34.5px;background:#474e6d;color:#fff;border-color:#474e6d;font-weight:bold;">1</div>
<div class="pg" style="left:1367.5px;width:33.0px;">2</div>
<div class="pg" style="left:1399.5px;width:34.0px;">3</div>
<div class="pg" style="left:1432.5px;width:34.0px;">4</div>
<div class="pg" style="left:1465.5px;width:67.0px;border-radius:0 3px 3px 0;">下一页</div>
<div class="pg" style="left:1538px;width:49.5px;background:#fff;border-color:#e4e4e4"></div>
<div class="pg" style="left:1593.5px;width:51px;background:#f4f4f4;border-radius:3px;font-size:13px;color:#444;top:665px;height:32.5px;line-height:30px">跳转</div>
</div>
<div id="wm">天云资源网</div>
</body></html>
